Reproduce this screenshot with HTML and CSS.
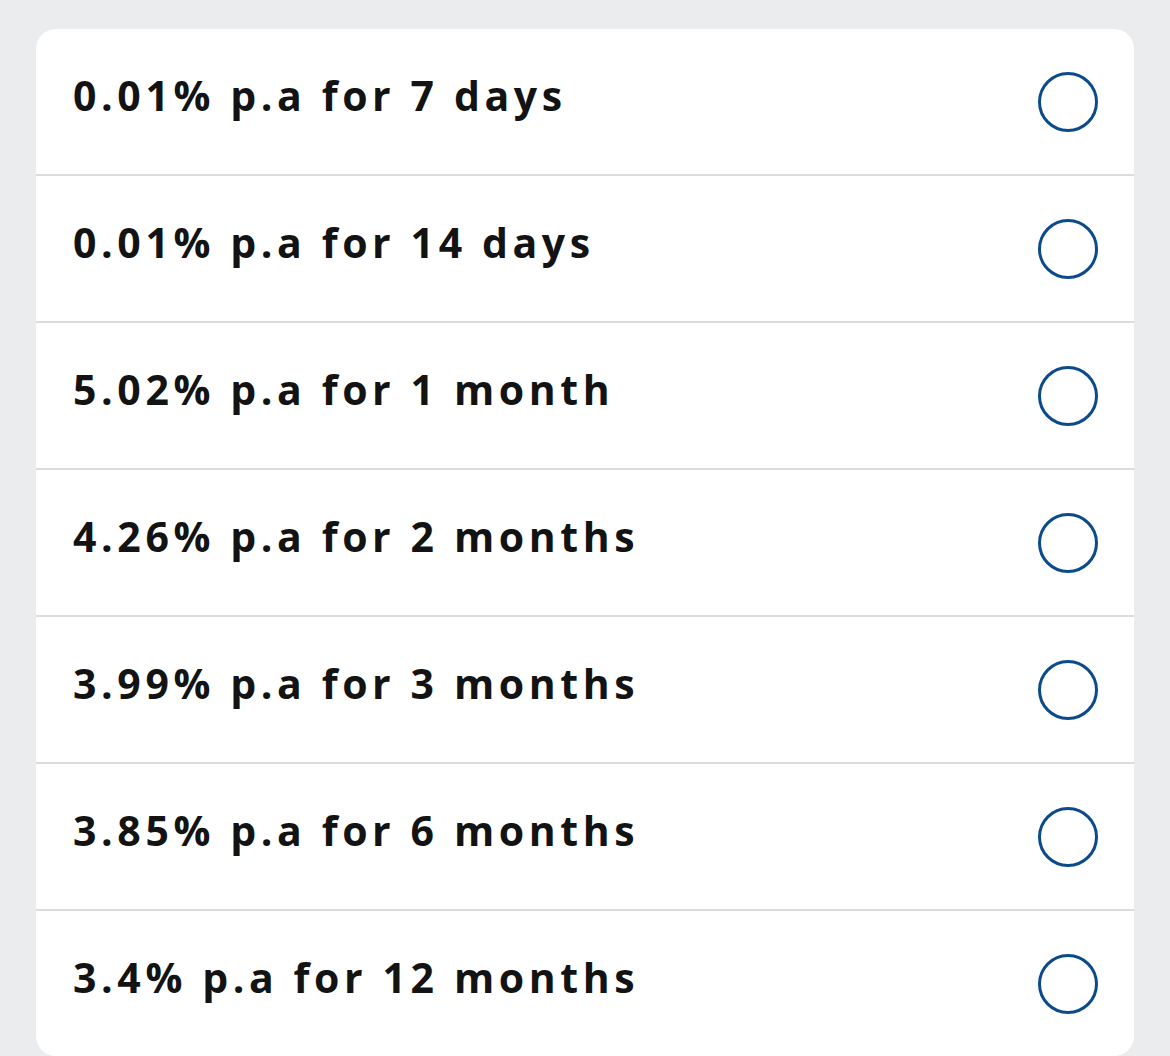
FILE: index.html
```html
<!DOCTYPE html>
<html>
<head>
  <title>Term deposit rates</title>
  <link rel="stylesheet" href="styles.css">
</head>
<body>
  <div class="rate-list">
    <label class="rate-row">
      <span class="rate-text">0.01% p.a for 7 days</span>
      <input type="radio" name="term" value="7d">
    </label>
    <label class="rate-row">
      <span class="rate-text">0.01% p.a for 14 days</span>
      <input type="radio" name="term" value="14d">
    </label>
    <label class="rate-row">
      <span class="rate-text">5.02% p.a for 1 month</span>
      <input type="radio" name="term" value="1m">
    </label>
    <label class="rate-row">
      <span class="rate-text">4.26% p.a for 2 months</span>
      <input type="radio" name="term" value="2m">
    </label>
    <label class="rate-row">
      <span class="rate-text">3.99% p.a for 3 months</span>
      <input type="radio" name="term" value="3m">
    </label>
    <label class="rate-row">
      <span class="rate-text">3.85% p.a for 6 months</span>
      <input type="radio" name="term" value="6m">
    </label>
    <label class="rate-row">
      <span class="rate-text">3.4% p.a for 12 months</span>
      <input type="radio" name="term" value="12m">
    </label>
  </div>
</body>
</html>
```

FILE: styles.css
```css
body {
  font-family: "Open Sans", "Noto Sans", sans-serif;
  margin: 0;
  padding: 29px 36px 0 36px;
  background-color: #ebecee;
  color: #131313;
}

.rate-list {
  background-color: #fff;
  border-radius: 20px;
  overflow: hidden;
}

.rate-row {
  display: flex;
  align-items: center;
  justify-content: space-between;
  height: 145px;
  padding-left: 37px;
  padding-right: 36px;
  border-bottom: 2px solid #dcdcdc;
  cursor: pointer;
}

.rate-row:last-child {
  border-bottom: none;
}

.rate-text {
  font-size: 41px;
  font-weight: bold;
  line-height: 1;
  letter-spacing: 4.6px;
  margin-bottom: 13px;
}

input[type="radio"] {
  appearance: none;
  margin: 0;
  width: 60px;
  height: 60px;
  border: 3px solid #0b4a8b;
  border-radius: 50%;
  box-sizing: border-box;
}

input[type="radio"]:checked {
  background: radial-gradient(#0b4a8b 45%, transparent 47%);
}
```
